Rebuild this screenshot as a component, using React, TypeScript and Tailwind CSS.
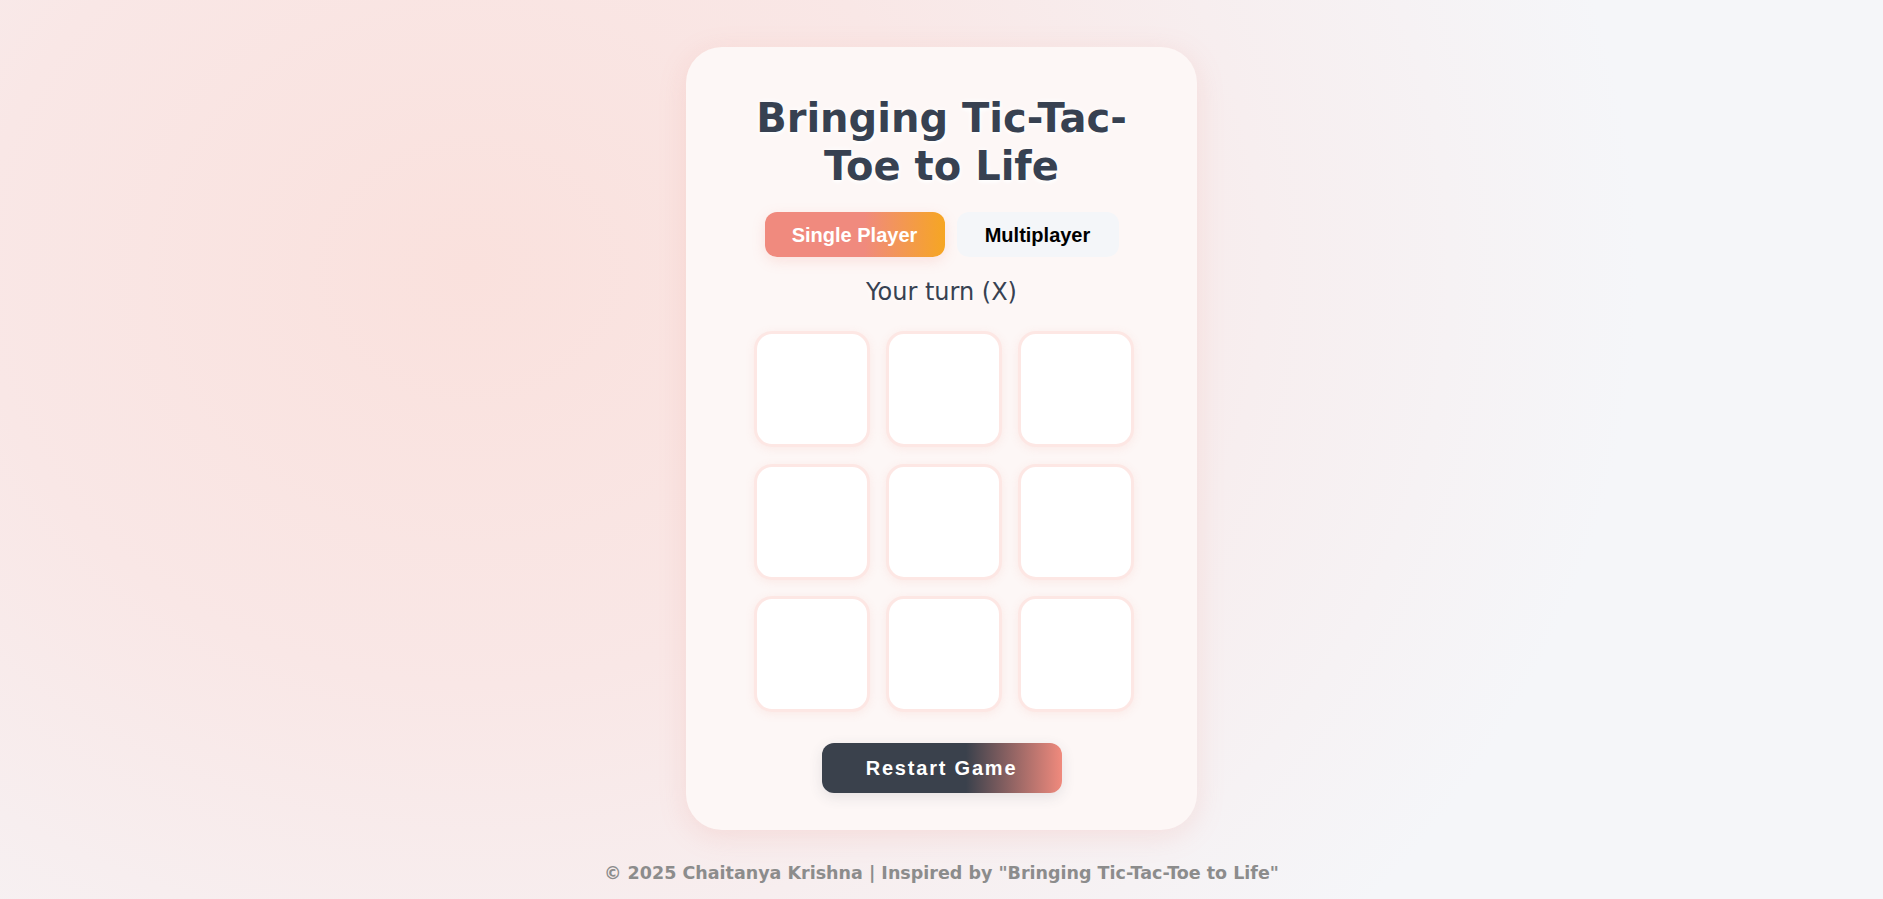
import { useState } from 'react';

type Cell = 'X' | 'O' | null;

export default function App() {
  const [mode, setMode] = useState<'single' | 'multi'>('single');
  const [board, setBoard] = useState<Cell[]>(Array(9).fill(null));
  const [turn, setTurn] = useState<'X' | 'O'>('X');

  function play(i: number) {
    if (board[i]) return;
    const next = [...board];
    next[i] = turn;
    setBoard(next);
    setTurn(turn === 'X' ? 'O' : 'X');
  }

  function restart() {
    setBoard(Array(9).fill(null));
    setTurn('X');
  }

  const active =
    'bg-[linear-gradient(90deg,#f08a7e_55%,#f6a623_100%)] text-white shadow-[0_4px_14px_rgba(240,138,125,0.2)]';
  const idle = 'bg-[#f4f6f9] text-black';

  return (
    <div className="min-h-screen w-full flex flex-col items-center bg-[radial-gradient(ellipse_62%_110%_at_25%_30%,#fae1dd_0%,#f9e7e6_42%,#f7eeef_68%,#f5f6f9_100%)]">
      {/* Card */}
      <div className="mt-[47px] w-[511px] rounded-[36px] bg-[#fdf7f6] shadow-[0_6px_28px_rgba(240,138,125,0.18)] flex flex-col items-center pt-[47px] pb-[37px] px-[48px]">
        <h1 className="font-['DejaVu_Sans',sans-serif] text-center text-[40px] leading-[48px] font-bold text-[#374151] [text-shadow:0_0_6px_#ffffff,0_2px_4px_#ffffff]">
          Bringing Tic-Tac-Toe to Life
        </h1>

        {/* Mode switch */}
        <div className="mt-[22px] flex gap-[12px] font-['Liberation_Sans',Arial,sans-serif]">
          <button
            onClick={() => setMode('single')}
            className={`h-[45px] w-[180px] rounded-[12px] text-[20px] font-bold ${mode === 'single' ? active : idle}`}
          >
            Single Player
          </button>
          <button
            onClick={() => setMode('multi')}
            className={`h-[45px] w-[162px] rounded-[12px] text-[20px] font-bold ${mode === 'multi' ? active : idle}`}
          >
            Multiplayer
          </button>
        </div>

        <p className="mt-[19px] font-['DejaVu_Sans',sans-serif] text-[24px] leading-[32px] text-[#374151] [text-shadow:0_0_6px_#ffffff]">
          {mode === 'single' && turn === 'X' ? 'Your turn (X)' : `Player ${turn}'s turn`}
        </p>

        {/* Board */}
        <div className="mt-[23px] ml-[5px] grid grid-cols-[repeat(3,116px)] grid-rows-[repeat(3,116px)] gap-x-[16px] gap-y-[16.5px]">
          {board.map((c, i) => (
            <button
              key={i}
              onClick={() => play(i)}
              className="rounded-[18px] border-[3px] border-[#fde7e4] bg-white shadow-[0_2px_10px_rgba(240,138,125,0.12)] font-['DejaVu_Sans',sans-serif] text-[56px] font-bold text-[#374151] flex items-center justify-center"
            >
              {c}
            </button>
          ))}
        </div>

        <button
          onClick={restart}
          className="mt-[31px] h-[50px] w-[240px] rounded-[12px] bg-[linear-gradient(90deg,#3a414c_60%,#f08a7d_100%)] font-['Liberation_Sans',Arial,sans-serif] text-white text-[20px] font-bold tracking-[1.8px] shadow-[0_4px_14px_rgba(55,65,81,0.12)]"
        >
          Restart Game
        </button>
      </div>

      <footer className="mt-[30px] font-['DejaVu_Sans',sans-serif] text-[17.5px] font-bold text-[#8c8c8c]">
        © 2025 Chaitanya Krishna | Inspired by "Bringing Tic-Tac-Toe to Life"
      </footer>
    </div>
  );
}
